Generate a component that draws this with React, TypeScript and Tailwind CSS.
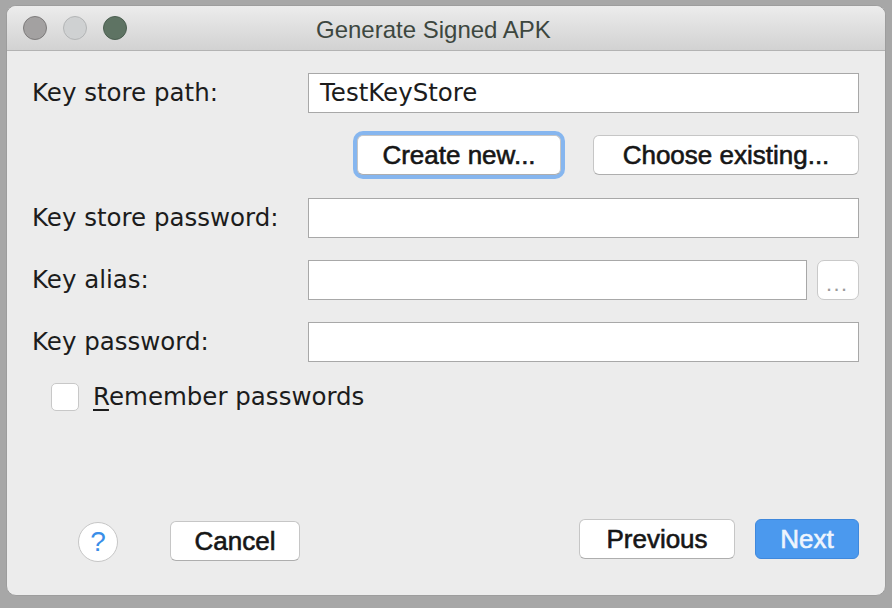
const labelFont = { fontFamily: '"DejaVu Sans", "Liberation Sans", sans-serif' };
const btnFont = { fontFamily: '"Liberation Sans", Arial, sans-serif' };

const Field = ({ value = "", className = "" }: { value?: string; className?: string }) => (
  <div
    className={`h-[40px] bg-white border border-[#a8a8a8] flex items-center pl-[11px] text-[24.5px] text-[#1c1c1c] ${className}`}
  >
    {value}
  </div>
);

const Row = ({ label, children, className = "" }: { label: string; children: React.ReactNode; className?: string }) => (
  <div className={`flex items-center ${className}`}>
    <div className="w-[276px] shrink-0 text-[24.5px] text-[#1c1c1c]">{label}</div>
    <div className="flex-1 flex items-center">{children}</div>
  </div>
);

const MacButton = ({ children, className = "" }: { children: React.ReactNode; className?: string }) => (
  <button
    className={`h-[40px] bg-white border border-[#c6c6c6] border-b-[#aeaeae] rounded-[6px] text-[26px] text-[#161616] [-webkit-text-stroke:0.6px_#161616] flex items-center justify-center ${className}`}
    style={btnFont}
  >
    {children}
  </button>
);

export default function App() {
  return (
    <div className="w-[892px] h-[608px] bg-[#a7a7a7] pt-[5px] pl-[6px] pr-[7px] pb-[12px] overflow-hidden" style={labelFont}>
      <div className="w-[880px] h-[591px] border border-[#9d9d9d] rounded-[10px] bg-[#ececec] flex flex-col overflow-hidden">
        {/* title bar */}
        <div className="h-[45px] shrink-0 flex items-center border-b border-[#b3b3b3] bg-gradient-to-b from-[#ececec] to-[#d2d2d2] relative">
          <div className="flex items-center gap-[16px] pl-[16px]">
            <span className="w-[24px] h-[24px] rounded-full bg-[#a3a1a1] border border-[#7d7b7b]" />
            <span className="w-[24px] h-[24px] rounded-full bg-[#cfd1d2] border border-[#b3b5b6]" />
            <span className="w-[24px] h-[24px] rounded-full bg-[#5e7363] border border-[#4b5e50]" />
          </div>
          <div className="absolute left-[309px] top-[6px] text-[24px] text-[#3d473f]" style={btnFont}>
            Generate Signed APK
          </div>
        </div>

        {/* form */}
        <div className="flex-1 flex flex-col pl-[25px] pr-[26px]">
          <Row label="Key store path:" className="mt-[22px]">
            <Field value="TestKeyStore" className="flex-1" />
          </Row>

          <div className="flex justify-end gap-[32px] mt-[22px]">
            <MacButton className="w-[204px] shadow-[0_0_0_4px_#86b6ef]">Create new...</MacButton>
            <MacButton className="w-[266px]">Choose existing...</MacButton>
          </div>

          <Row label="Key store password:" className="mt-[23px]">
            <Field className="flex-1" />
          </Row>

          <Row label="Key alias:" className="mt-[22px]">
            <Field className="flex-1" />
            <div className="ml-[10px] w-[42px] h-[40px] bg-white border border-[#c9c9c9] rounded-[7px] flex items-end justify-center pb-[6px]">
              <span className="text-[12px] leading-none tracking-[3px] text-[#9a9a9a] font-bold">...</span>
            </div>
          </Row>

          <Row label="Key password:" className="mt-[22px]">
            <Field className="flex-1" />
          </Row>

          <div className="flex items-center mt-[21px] ml-[19px]">
            <span className="w-[28px] h-[28px] bg-white border border-[#c8c8c8] rounded-[5px]" />
            <span className="ml-[14px] text-[24.5px] text-[#1c1c1c] leading-[28px]">
              <span className="underline underline-offset-[4px]">R</span>emember passwords
            </span>
          </div>
        </div>

        {/* footer */}
        <div className="flex items-start pl-[71px] pr-[26px] pb-[33px]">
          <div
            className="mt-[3px] w-[40px] h-[40px] rounded-full bg-white border border-[#c6c6c6] flex items-center justify-center text-[28px] text-[#3a8ee8]"
            style={btnFont}
          >
            ?
          </div>
          <MacButton className="ml-[52px] mt-[2px] w-[130px]">Cancel</MacButton>
          <div className="flex-1" />
          <MacButton className="w-[156px]">Previous</MacButton>
          <button
            className="ml-[20px] w-[104px] h-[40px] rounded-[6px] bg-[#4b99ee] border border-[#3f88dc] text-[26px] text-[#eef5fd] [-webkit-text-stroke:0.6px_#eef5fd]"
            style={btnFont}
          >
            Next
          </button>
        </div>
      </div>
    </div>
  );
}
